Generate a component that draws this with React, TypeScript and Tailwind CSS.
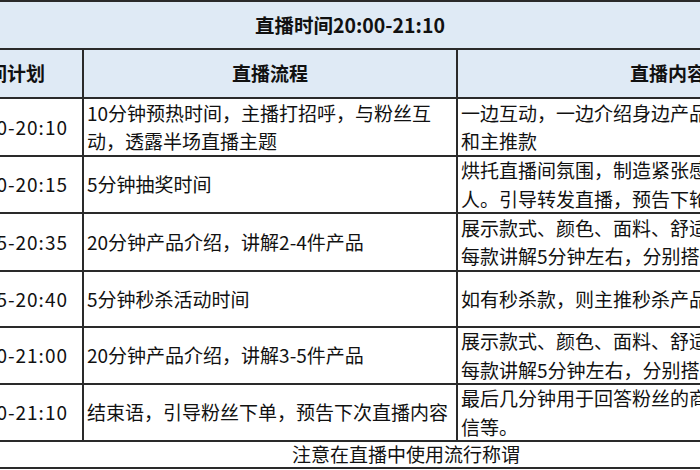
import React from 'react';

type Row = {
  time: string;
  flow: string[];
  content: string[];
  h: string;
};

const rows: Row[] = [
  {
    time: '20:00-20:10',
    flow: ['10分钟预热时间，主播打招呼，与粉丝互', '动，透露半场直播主题'],
    content: ['一边互动，一边介绍身边产品，重点介绍爆款', '和主推款'],
    h: 'h-[58px]',
  },
  {
    time: '20:10-20:15',
    flow: ['5分钟抽奖时间'],
    content: ['烘托直播间氛围，制造紧张感，抽取幸运粉丝', '人。引导转发直播，预告下轮抽奖时间'],
    h: 'h-[57px]',
  },
  {
    time: '20:15-20:35',
    flow: ['20分钟产品介绍，讲解2-4件产品'],
    content: ['展示款式、颜色、面料、舒适度等产品特点，', '每款讲解5分钟左右，分别搭配展示上身效果'],
    h: 'h-[58px]',
  },
  {
    time: '20:35-20:40',
    flow: ['5分钟秒杀活动时间'],
    content: ['如有秒杀款，则主推秒杀产品，营造抢购氛围'],
    h: 'h-[56px]',
  },
  {
    time: '20:40-21:00',
    flow: ['20分钟产品介绍，讲解3-5件产品'],
    content: ['展示款式、颜色、面料、舒适度等产品特点，', '每款讲解5分钟左右，分别搭配展示上身效果'],
    h: 'h-[57px]',
  },
  {
    time: '21:00-21:10',
    flow: ['结束语，引导粉丝下单，预告下次直播内容'],
    content: ['最后几分钟用于回答粉丝的商品问题，引导加微', '信等。'],
    h: 'h-[57px]',
  },
];

const Lines: React.FC<{ lines: string[] }> = ({ lines }) => (
  <div className="whitespace-nowrap leading-[28.5px]">
    {lines.map((l, i) => (
      <div key={i}>{l}</div>
    ))}
  </div>
);

export default function App() {
  return (
    <div className="w-[700px] h-[470px] overflow-hidden bg-white font-['Noto_Sans_CJK_SC','Noto_Sans',sans-serif] text-[19px] text-[#111]">
      <div className="ml-[-49px] w-[927px]">
        {/* title */}
        <div className="h-[50px] flex items-center pl-[304px] bg-[#dfeaf5] border-t-2 border-b-2 border-[#2a2a2a] font-bold text-[19.5px]">
          直播时间20:00-21:10
        </div>

        {/* header */}
        <div className="h-[49px] grid grid-cols-[133px_374px_420px] bg-[#dfeaf5] border-b-2 border-[#2a2a2a] font-bold">
          <div className="flex items-center justify-end pr-[37px] border-r-2 border-[#2a2a2a]">时间计划</div>
          <div className="flex items-center justify-center border-r-2 border-[#2a2a2a]">直播流程</div>
          <div className="flex items-center justify-center">直播内容</div>
        </div>

        {rows.map((r) => (
          <div
            key={r.time}
            className={`${r.h} grid grid-cols-[133px_374px_420px] border-b-2 border-[#2a2a2a] overflow-hidden`}
          >
            <div className="flex items-center justify-end pr-[14px] tracking-[1px] border-r-2 border-[#2a2a2a] whitespace-nowrap">
              {r.time}
            </div>
            <div className="flex items-center pl-[3px] border-r-2 border-[#2a2a2a] overflow-hidden">
              <Lines lines={r.flow} />
            </div>
            <div className="flex items-center pl-[3px] overflow-hidden">
              <Lines lines={r.content} />
            </div>
          </div>
        ))}

        {/* note */}
        <div className="h-[27px] flex items-center pl-[341px] border-b-2 border-[#2a2a2a] whitespace-nowrap">
          注意在直播中使用流行称谓
        </div>
      </div>
    </div>
  );
}
